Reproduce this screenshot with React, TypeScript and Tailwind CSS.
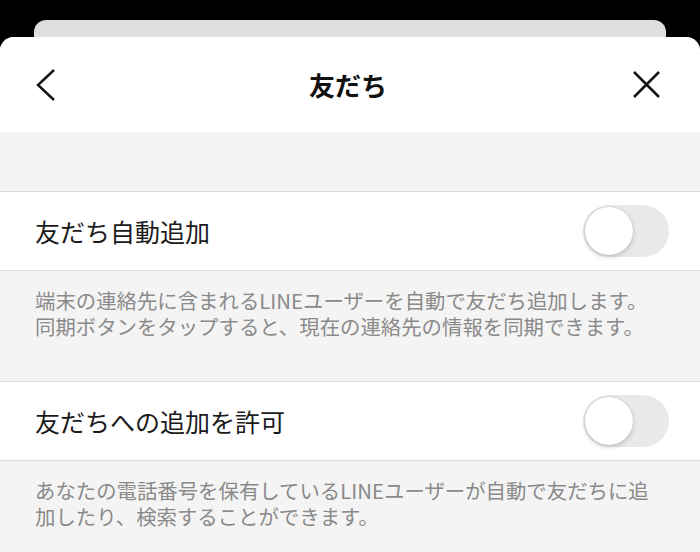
type SettingProps = {
  label: string
  lines: string[]
}

function Toggle() {
  return (
    <div className="relative h-[52px] w-[86px] rounded-full bg-[#e9e9eb]">
      <div className="absolute left-[2px] top-[2px] h-[48px] w-[48px] rounded-full bg-white shadow-[0_2px_5px_rgba(0,0,0,0.18),0_0_1px_rgba(0,0,0,0.2)]" />
    </div>
  )
}

function Setting({ label, lines }: SettingProps) {
  return (
    <section>
      <div className="flex h-[80px] items-center justify-between border-y border-[#dcdcdc] bg-white pl-[35px] pr-[31px]">
        <span className="text-[25px] leading-none text-[#1b1b1b]">{label}</span>
        <Toggle />
      </div>
      <p className="pl-[35px] pb-[42px] pt-[16px] text-[20.4px] leading-[26px] text-[#8a8a8a]">
        {lines.map((line) => (
          <span key={line} className="block whitespace-nowrap">
            {line}
          </span>
        ))}
      </p>
    </section>
  )
}

export default function App() {
  return (
    <div
      className="h-[552px] w-[700px] overflow-hidden bg-black pt-[20px]"
      style={{ fontFamily: '"Noto Sans CJK JP", "Noto Sans", sans-serif' }}
    >
      <div className="mx-[34px] h-[24px] rounded-t-[12px] bg-[#dedede]" />
      <div className="-mt-[7px] h-full rounded-t-[14px] bg-[#f4f4f4]">
        <header className="grid h-[95px] grid-cols-[1fr_auto_1fr] items-center rounded-t-[14px] bg-white pl-[36px] pr-[40px]">
          <svg width="20" height="32" viewBox="0 0 20 32" fill="none" className="text-[#111]">
            <path d="M18 1 L2 16 L18 31" stroke="currentColor" strokeWidth="2.4" />
          </svg>
          <h1 className="text-[26px] font-bold text-[#111]">友だち</h1>
          <svg width="27" height="27" viewBox="0 0 27 27" fill="none" className="justify-self-end text-[#111]">
            <path d="M1 1 L26 26 M26 1 L1 26" stroke="currentColor" strokeWidth="2.5" />
          </svg>
        </header>
        <div className="h-[59px]" />
        <Setting
          label="友だち自動追加"
          lines={[
            '端末の連絡先に含まれるLINEユーザーを自動で友だち追加します。',
            '同期ボタンをタップすると、現在の連絡先の情報を同期できます。',
          ]}
        />
        <Setting
          label="友だちへの追加を許可"
          lines={[
            'あなたの電話番号を保有しているLINEユーザーが自動で友だちに追',
            '加したり、検索することができます。',
          ]}
        />
      </div>
    </div>
  )
}
